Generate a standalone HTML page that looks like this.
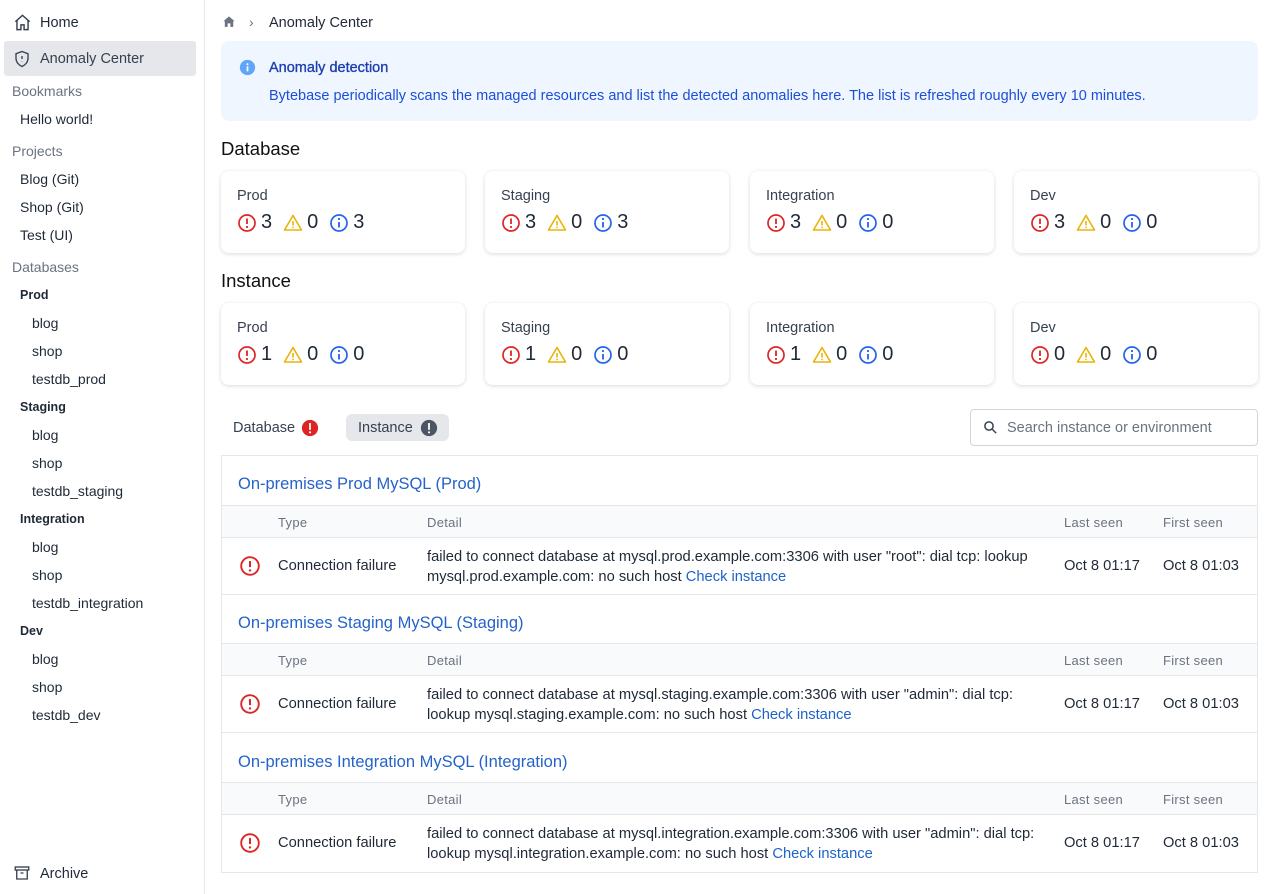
<!DOCTYPE html>
<html><head><meta charset="utf-8"><style>
*{box-sizing:border-box;margin:0;padding:0}
body{width:1267px;height:894px;overflow:hidden;font-family:"Liberation Sans",sans-serif;color:#1f2937;background:#fff;position:relative;font-size:14px}
.a{position:absolute;white-space:nowrap}
.side{position:absolute;left:0;top:0;width:205px;height:894px;border-right:1px solid #e5e7eb}
.grp{color:#6b7280;font-size:14px}
.env{font-weight:bold;font-size:12.5px;color:#1f2937}
.card{position:absolute;width:244px;height:82px;border-radius:8px;box-shadow:0 1px 4px rgba(0,0,0,.15);background:#fff}
.card .t{position:absolute;left:16px;top:17px;font-size:14.5px;color:#374151}
.card .n{position:absolute;left:16px;top:40px;font-size:20px;display:flex;align-items:center;gap:4px}
.card .n span{margin-right:7px}
.blue{color:#1d63c9}
.hdr{position:absolute;left:222px;width:1035px;height:33px;background:#f9fafb;border-top:1px solid #e5e7eb;border-bottom:1px solid #e5e7eb;font-size:13px;color:#6b7280;letter-spacing:.3px}
.hdr div,.row div{position:absolute}
.row{position:absolute;left:222px;width:1035px;font-size:14.7px;border-bottom:1px solid #e5e7eb}
.gh{position:absolute;left:238px;font-size:16.5px;color:#2563c9}
</style></head><body>
<div class="side">
 <svg class="a" style="left:13px;top:13px" width="19" height="19" viewBox="0 0 24 24" fill="none" stroke="#374151" stroke-width="1.8"><path d="M3 11l9-8 9 8M5 9v12h5v-6h4v6h5V9"/></svg>
 <div class="a" style="left:40px;top:15px;font-size:14.5px">Home</div>
 <div class="a" style="left:4px;top:41px;width:192px;height:35px;background:#e5e7eb;border-radius:3px"></div>
 <svg class="a" style="left:13px;top:50px" width="18" height="18" viewBox="0 0 24 24" fill="none" stroke="#374151" stroke-width="1.8"><path d="M12 2l8 3v6c0 5-3.5 9-8 11-4.5-2-8-6-8-11V5z"/><path d="M12 8v4M12 15.5v.5"/></svg>
 <div class="a" style="left:40px;top:51px;font-size:14.5px;color:#374151">Anomaly Center</div>
 <div class="a grp" style="left:12px;top:83px">Bookmarks</div>
 <div class="a" style="left:20px;top:111px">Hello world!</div>
 <div class="a grp" style="left:12px;top:143px">Projects</div>
 <div class="a" style="left:20px;top:171px">Blog (Git)</div>
 <div class="a" style="left:20px;top:199px">Shop (Git)</div>
 <div class="a" style="left:20px;top:227px">Test (UI)</div>
 <div class="a grp" style="left:12px;top:259px">Databases</div>
 <div class="a env" style="left:20px;top:288px">Prod</div>
 <div class="a" style="left:32px;top:315px">blog</div>
 <div class="a" style="left:32px;top:343px">shop</div>
 <div class="a" style="left:32px;top:371px">testdb_prod</div>
 <div class="a env" style="left:20px;top:400px">Staging</div>
 <div class="a" style="left:32px;top:427px">blog</div>
 <div class="a" style="left:32px;top:455px">shop</div>
 <div class="a" style="left:32px;top:483px">testdb_staging</div>
 <div class="a env" style="left:20px;top:512px">Integration</div>
 <div class="a" style="left:32px;top:539px">blog</div>
 <div class="a" style="left:32px;top:567px">shop</div>
 <div class="a" style="left:32px;top:595px">testdb_integration</div>
 <div class="a env" style="left:20px;top:624px">Dev</div>
 <div class="a" style="left:32px;top:651px">blog</div>
 <div class="a" style="left:32px;top:679px">shop</div>
 <div class="a" style="left:32px;top:707px">testdb_dev</div>
 <svg class="a" style="left:13px;top:864px" width="18" height="18" viewBox="0 0 24 24" fill="none" stroke="#374151" stroke-width="1.8"><rect x="3" y="4" width="18" height="4"/><path d="M5 8v12h14V8M10 12h4"/></svg>
 <div class="a" style="left:40px;top:866px;font-size:14.5px">Archive</div>
</div>

<svg class="a" style="left:222px;top:15px" width="14" height="14" viewBox="0 0 20 20" fill="#6b7280"><path d="M10 2l8 7h-2v8h-4v-5H8v5H4V9H2z"/></svg>
<div class="a" style="left:249px;top:14px;color:#6b7280">›</div>
<div class="a" style="left:269px;top:15px;font-size:14.5px">Anomaly Center</div>

<div class="a" style="left:221px;top:41px;width:1037px;height:80px;background:#eff6ff;border-radius:8px"></div>
<svg class="a" style="left:239px;top:59px" width="17" height="17" viewBox="0 0 20 20"><circle cx="10" cy="10" r="9" fill="#60a5fa"/><rect x="9" y="8.5" width="2" height="6" fill="#fff"/><circle cx="10" cy="6" r="1.2" fill="#fff"/></svg>
<div class="a" style="left:269px;top:60px;color:#1e40af;font-size:14.5px;-webkit-text-stroke:.35px #1e40af">Anomaly detection</div>
<div class="a" style="left:269px;top:88px;color:#1d4ed8;font-size:14.5px">Bytebase periodically scans the managed resources and list the detected anomalies here. The list is refreshed roughly every 10 minutes.</div>

<div class="a" style="left:221px;top:138px;font-size:18.5px;color:#111">Database</div>
<div class="a" style="left:221px;top:270px;font-size:18.5px;color:#111">Instance</div>

<svg width="0" height="0" style="position:absolute"><defs>
<g id="er"><circle cx="10" cy="10" r="8" fill="none" stroke="#dc2626" stroke-width="1.7"/><path d="M10 5.5v5.5" stroke="#dc2626" stroke-width="1.8"/><circle cx="10" cy="14" r="1.1" fill="#dc2626"/></g>
<g id="wa"><path d="M10 2.5L18.5 17H1.5z" fill="none" stroke="#eab308" stroke-width="1.6" stroke-linejoin="round"/><path d="M10 8v4.5" stroke="#eab308" stroke-width="1.6"/><circle cx="10" cy="14.5" r=".9" fill="#eab308"/></g>
<g id="in"><circle cx="10" cy="10" r="8" fill="none" stroke="#2563eb" stroke-width="1.7"/><path d="M10 9v5.5" stroke="#2563eb" stroke-width="1.8"/><circle cx="10" cy="6" r="1.1" fill="#2563eb"/></g>
</defs></svg>

<div class="card" style="left:221px;top:171px"><div class="t">Prod</div><div class="n"><svg width="20" height="20"><use href="#er"/></svg><span>3</span><svg width="20" height="20"><use href="#wa"/></svg><span>0</span><svg width="20" height="20"><use href="#in"/></svg><span>3</span></div></div>
<div class="card" style="left:485px;top:171px"><div class="t">Staging</div><div class="n"><svg width="20" height="20"><use href="#er"/></svg><span>3</span><svg width="20" height="20"><use href="#wa"/></svg><span>0</span><svg width="20" height="20"><use href="#in"/></svg><span>3</span></div></div>
<div class="card" style="left:750px;top:171px"><div class="t">Integration</div><div class="n"><svg width="20" height="20"><use href="#er"/></svg><span>3</span><svg width="20" height="20"><use href="#wa"/></svg><span>0</span><svg width="20" height="20"><use href="#in"/></svg><span>0</span></div></div>
<div class="card" style="left:1014px;top:171px"><div class="t">Dev</div><div class="n"><svg width="20" height="20"><use href="#er"/></svg><span>3</span><svg width="20" height="20"><use href="#wa"/></svg><span>0</span><svg width="20" height="20"><use href="#in"/></svg><span>0</span></div></div>

<div class="card" style="left:221px;top:303px"><div class="t">Prod</div><div class="n"><svg width="20" height="20"><use href="#er"/></svg><span>1</span><svg width="20" height="20"><use href="#wa"/></svg><span>0</span><svg width="20" height="20"><use href="#in"/></svg><span>0</span></div></div>
<div class="card" style="left:485px;top:303px"><div class="t">Staging</div><div class="n"><svg width="20" height="20"><use href="#er"/></svg><span>1</span><svg width="20" height="20"><use href="#wa"/></svg><span>0</span><svg width="20" height="20"><use href="#in"/></svg><span>0</span></div></div>
<div class="card" style="left:750px;top:303px"><div class="t">Integration</div><div class="n"><svg width="20" height="20"><use href="#er"/></svg><span>1</span><svg width="20" height="20"><use href="#wa"/></svg><span>0</span><svg width="20" height="20"><use href="#in"/></svg><span>0</span></div></div>
<div class="card" style="left:1014px;top:303px"><div class="t">Dev</div><div class="n"><svg width="20" height="20"><use href="#er"/></svg><span>0</span><svg width="20" height="20"><use href="#wa"/></svg><span>0</span><svg width="20" height="20"><use href="#in"/></svg><span>0</span></div></div>

<div class="a" style="left:233px;top:420px;color:#374151;font-size:14.5px">Database</div>
<svg class="a" style="left:301px;top:419px" width="18" height="18" viewBox="0 0 20 20"><circle cx="10" cy="10" r="9" fill="#dc2626"/><rect x="9" y="4.5" width="2" height="7.5" fill="#fff"/><circle cx="10" cy="14.8" r="1.2" fill="#fff"/></svg>
<div class="a" style="left:346px;top:414px;width:103px;height:27px;background:#e5e7eb;border-radius:6px"></div>
<div class="a" style="left:358px;top:420px;color:#374151;font-size:14.5px">Instance</div>
<svg class="a" style="left:420px;top:419px" width="18" height="18" viewBox="0 0 20 20"><circle cx="10" cy="10" r="9" fill="#4b5563"/><rect x="9" y="4.5" width="2" height="7.5" fill="#fff"/><circle cx="10" cy="14.8" r="1.2" fill="#fff"/></svg>

<div class="a" style="left:970px;top:409px;width:288px;height:37px;border:1px solid #d1d5db;border-radius:4px"></div>
<svg class="a" style="left:983px;top:420px" width="15" height="15" viewBox="0 0 20 20" fill="none" stroke="#374151" stroke-width="2"><circle cx="8" cy="8" r="5.5"/><path d="M12.5 12.5l5 5"/></svg>
<div class="a" style="left:1007px;top:420px;color:#6b7280;font-size:14.5px">Search instance or environment</div>

<div class="a" style="left:221px;top:455px;width:1037px;height:418px;border:1px solid #e5e7eb"></div>

<div class="gh" style="top:475px">On-premises Prod MySQL (Prod)</div>
<div class="hdr" style="top:505px"><div style="left:56px;top:9px">Type</div><div style="left:205px;top:9px">Detail</div><div style="left:842px;top:9px">Last seen</div><div style="left:941px;top:9px">First seen</div></div>
<div class="row" style="top:538px;height:57px"><svg style="position:absolute;left:17px;top:17px" width="22" height="22" viewBox="0 0 20 20"><use href="#er"/></svg><div style="left:56px;top:20px">Connection failure</div><div style="left:205px;top:9px;line-height:20px">failed to connect database at mysql.prod.example.com:3306 with user "root": dial tcp: lookup<br>mysql.prod.example.com: no such host <span class="blue">Check instance</span></div><div style="left:842px;top:20px">Oct 8 01:17</div><div style="left:941px;top:20px">Oct 8 01:03</div></div>

<div class="gh" style="top:614px">On-premises Staging MySQL (Staging)</div>
<div class="hdr" style="top:643px"><div style="left:56px;top:9px">Type</div><div style="left:205px;top:9px">Detail</div><div style="left:842px;top:9px">Last seen</div><div style="left:941px;top:9px">First seen</div></div>
<div class="row" style="top:676px;height:57px"><svg style="position:absolute;left:17px;top:17px" width="22" height="22" viewBox="0 0 20 20"><use href="#er"/></svg><div style="left:56px;top:20px">Connection failure</div><div style="left:205px;top:9px;line-height:20px">failed to connect database at mysql.staging.example.com:3306 with user "admin": dial tcp:<br>lookup mysql.staging.example.com: no such host <span class="blue">Check instance</span></div><div style="left:842px;top:20px">Oct 8 01:17</div><div style="left:941px;top:20px">Oct 8 01:03</div></div>

<div class="gh" style="top:753px">On-premises Integration MySQL (Integration)</div>
<div class="hdr" style="top:782px"><div style="left:56px;top:9px">Type</div><div style="left:205px;top:9px">Detail</div><div style="left:842px;top:9px">Last seen</div><div style="left:941px;top:9px">First seen</div></div>
<div class="row" style="top:815px;height:57px;border-bottom:none"><svg style="position:absolute;left:17px;top:17px" width="22" height="22" viewBox="0 0 20 20"><use href="#er"/></svg><div style="left:56px;top:20px">Connection failure</div><div style="left:205px;top:9px;line-height:20px">failed to connect database at mysql.integration.example.com:3306 with user "admin": dial tcp:<br>lookup mysql.integration.example.com: no such host <span class="blue">Check instance</span></div><div style="left:842px;top:20px">Oct 8 01:17</div><div style="left:941px;top:20px">Oct 8 01:03</div></div>
</body></html>
